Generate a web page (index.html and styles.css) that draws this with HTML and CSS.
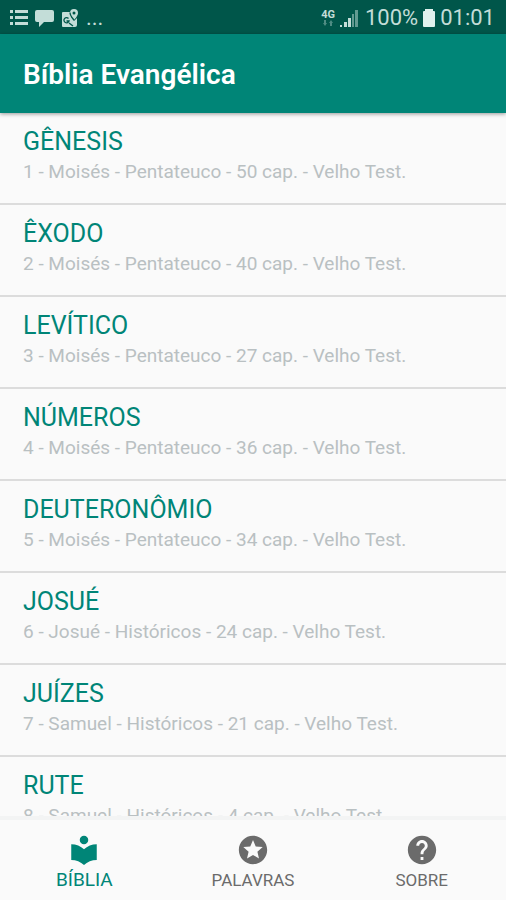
FILE: index.html
```html
<!DOCTYPE html>
<html lang="pt-BR">
<head>
    <meta charset="UTF-8">
    <meta name="viewport" content="width=device-width, initial-scale=1.0">
    <title>Bíblia Evangélica</title>
    <link rel="stylesheet" href="styles.css">
</head>
<body>

<!-- Barra de status -->
<div class="status-bar">
    <div class="status-left">
        <svg width="18" height="18" viewBox="0 0 18 18" fill="currentColor">
            <path d="M0 1h3v3H0zM5 1h13v3H5zM0 7h3v3H0zM5 7h13v3H5zM0 13h3v3H0zM5 13h13v3H5z"/>
        </svg>
        <svg width="19" height="18" viewBox="0 0 19 18" fill="currentColor">
            <path d="M2 1h15a2 2 0 0 1 2 2v8a2 2 0 0 1-2 2H9l-5 5v-5H2a2 2 0 0 1-2-2V3a2 2 0 0 1 2-2z"/>
        </svg>
        <svg width="18" height="18" viewBox="0 0 18 18">
            <path fill="currentColor" d="M2 3h8v5l3 4 3-3v7a2 2 0 0 1-2 2H2a1 1 0 0 1-1-1V4a1 1 0 0 1 1-1z"/>
            <path fill="currentColor" fill-rule="evenodd" d="M13 0a4 4 0 0 1 4 4c0 3-4 7-4 7s-4-4-4-7a4 4 0 0 1 4-4zm0 2.500a1.500 1.500 0 1 0 0 3 1.500 1.500 0 0 0 0-3z"/>
            <path fill="none" stroke="#00564a" stroke-width="1.300" d="M7.500 9.500a2.600 2.600 0 1 0 .5 2.500H5.500M8 14l4 3M9 3.500c0 3 4 7.500 4 7.500"/>
        </svg>
        <span class="more">...</span>
    </div>
    <div class="status-right">
        <div class="network">
            <span>4G</span>
            <svg width="10" height="6" viewBox="0 0 10 6" fill="currentColor" opacity=".4">
                <path d="M2 6L0 3h1V0h2v3h1zM8 0l2 3H9v3H7V3H6z"/>
            </svg>
        </div>
        <svg class="signal" width="18" height="17" viewBox="0 0 18 17" fill="currentColor">
            <path d="M0 15h2v2H0zM4 12h3v5H4zM8 8h3v9H8z"/>
            <path opacity=".5" d="M12 4h2v13h-2zM15 0h3v17h-3z"/>
        </svg>
        <span>100%</span>
        <svg class="battery" width="12" height="18" viewBox="0 0 12 18" fill="currentColor">
            <path d="M2 0h8v2h1a1 1 0 0 1 1 1v14a1 1 0 0 1-1 1H1a1 1 0 0 1-1-1V3a1 1 0 0 1 1-1h1z"/>
        </svg>
        <span>01:01</span>
    </div>
</div>

<header class="toolbar">
    <h1>Bíblia Evangélica</h1>
</header>

<!-- Lista de livros -->
<main class="book-list">
    <div class="book-item">
        <h2>GÊNESIS</h2>
        <p>1 - Moisés - Pentateuco - 50 cap. - Velho Test.</p>
    </div>
    <div class="book-item">
        <h2>ÊXODO</h2>
        <p>2 - Moisés - Pentateuco - 40 cap. - Velho Test.</p>
    </div>
    <div class="book-item">
        <h2>LEVÍTICO</h2>
        <p>3 - Moisés - Pentateuco - 27 cap. - Velho Test.</p>
    </div>
    <div class="book-item">
        <h2>NÚMEROS</h2>
        <p>4 - Moisés - Pentateuco - 36 cap. - Velho Test.</p>
    </div>
    <div class="book-item">
        <h2>DEUTERONÔMIO</h2>
        <p>5 - Moisés - Pentateuco - 34 cap. - Velho Test.</p>
    </div>
    <div class="book-item">
        <h2>JOSUÉ</h2>
        <p>6 - Josué - Históricos - 24 cap. - Velho Test.</p>
    </div>
    <div class="book-item">
        <h2>JUÍZES</h2>
        <p>7 - Samuel - Históricos - 21 cap. - Velho Test.</p>
    </div>
    <div class="book-item">
        <h2>RUTE</h2>
        <p>8 - Samuel - Históricos - 4 cap. - Velho Test.</p>
    </div>
</main>

<!-- Menu inferior -->
<nav class="bottom-nav">
    <button class="nav-item active" type="button">
        <svg width="34" height="34" viewBox="0 0 24 24" fill="currentColor">
            <path d="M12 11.550C9.640 9.350 6.480 8 3 8v11c3.480 0 6.640 1.350 9 3.550 2.360-2.190 5.520-3.550 9-3.550V8c-3.480 0-6.640 1.350-9 3.550zM12 8c1.660 0 3-1.340 3-3s-1.340-3-3-3-3 1.340-3 3 1.340 3 3 3z"/>
        </svg>
        <span>BÍBLIA</span>
    </button>
    <button class="nav-item" type="button">
        <svg width="34" height="34" viewBox="0 0 24 24" fill="currentColor">
            <path d="M11.990 2C6.470 2 2 6.480 2 12s4.470 10 9.990 10C17.520 22 22 17.520 22 12S17.520 2 11.990 2zm4.240 16L12 15.450 7.770 18l1.120-4.810-3.730-3.230 4.920-.42L12 5l1.920 4.530 4.920.42-3.730 3.230L16.230 18z"/>
        </svg>
        <span>PALAVRAS</span>
    </button>
    <button class="nav-item" type="button">
        <svg width="34" height="34" viewBox="0 0 24 24" fill="currentColor">
            <path d="M12 2C6.480 2 2 6.480 2 12s4.480 10 10 10 10-4.480 10-10S17.520 2 12 2zm1 17h-2v-2h2v2zm2.070-7.750l-.9.920C13.450 12.900 13 13.500 13 15h-2v-.5c0-1.100.45-2.100 1.170-2.830l1.240-1.260c.37-.36.59-.86.59-1.410 0-1.100-.9-2-2-2s-2 .9-2 2H8c0-2.210 1.790-4 4-4s4 1.790 4 4c0 .88-.36 1.680-.93 2.250z"/>
        </svg>
        <span>SOBRE</span>
    </button>
</nav>

</body>
</html>
```
FILE: styles.css
```css
* {
    box-sizing: border-box;
}
body {
    display: flex;
    flex-direction: column;
    height: 100vh;
    margin: 0;
    background-color: #fafafa;
    font-family: Roboto, "Liberation Sans", sans-serif;
    overflow: hidden;
}
h1, h2, p {
    margin: 0;
    font-weight: 400;
}
.status-bar {
    display: flex;
    flex: none;
    justify-content: space-between;
    align-items: center;
    height: 34px;
    padding: 2px 11px 0 10px;
    background-color: #00564a;
    color: #c3ddd8;
    font-size: 22px;
    line-height: 32px;
}
.status-left, .status-right {
    display: flex;
    align-items: center;
}
.status-left {
    gap: 7px;
}
.status-right {
    gap: 5px;
}
.network {
    display: flex;
    flex-direction: column;
    align-items: center;
    font-size: 11px;
    font-weight: 700;
    line-height: 10px;
}
.signal {
    margin-right: 2px;
}
.battery {
    color: #e0f2ee;
}
.toolbar {
    position: relative;
    flex: none;
    padding: 22px 23px 19px;
    background-color: #008577;
    box-shadow: 0 1px 4px rgba(0, 0, 0, 0.4);
}
.toolbar h1 {
    color: #fff;
    font-size: 28px;
    font-weight: 600;
    line-height: 38px;
}
.book-list {
    flex: 1;
    min-height: 0;
    overflow: hidden;
}
.book-item {
    height: 92px;
    padding: 13px 23px 0;
    border-bottom: 2px solid #dcdcdc;
}
.book-item h2 {
    color: #008577;
    font-size: 25px;
    line-height: 32px;
}
.book-item p {
    color: #b9c0c2;
    font-size: 19px;
    line-height: 28px;
}
.bottom-nav {
    display: flex;
    flex: none;
    height: 84px;
    border-top: 4px solid #f3f4f4;
    background-color: #fafafa;
}
.nav-item {
    display: flex;
    flex: 1;
    flex-direction: column;
    align-items: center;
    padding: 13px 0 0;
    border: none;
    background: none;
    color: #6b6b6b;
    font-family: inherit;
    font-size: 17px;
    line-height: 26px;
    cursor: pointer;
}
.nav-item.active {
    color: #008577;
    font-size: 19px;
}
```
